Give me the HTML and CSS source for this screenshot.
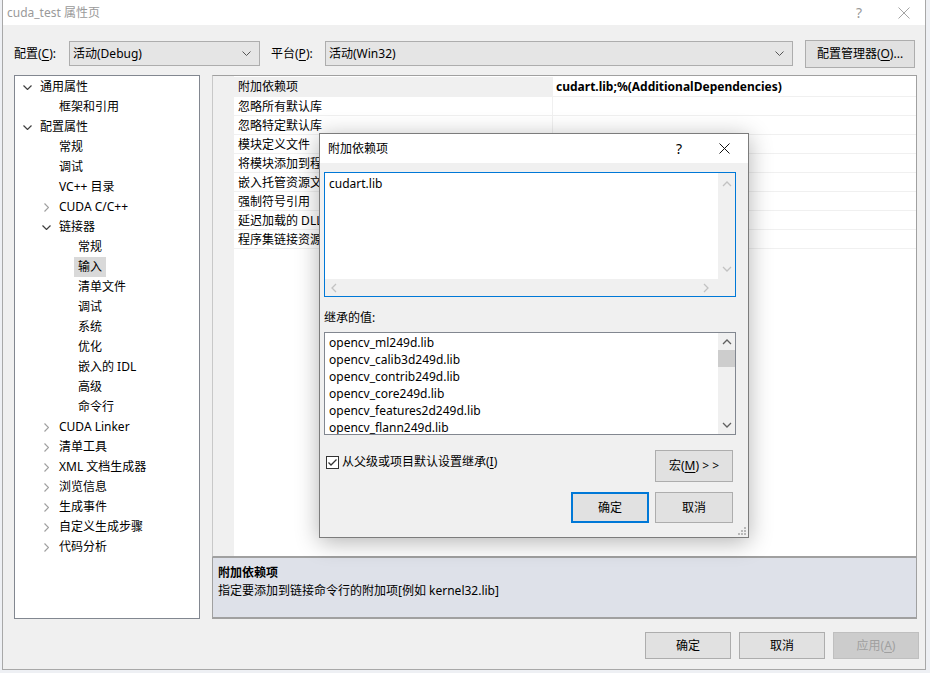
FILE: index.html
```html
<!DOCTYPE html>
<html lang="zh-CN">
<head>
	<meta charset="UTF-8">
	<title>cuda_test 属性页</title>
	<link rel="stylesheet" href="styles.css">
</head>
<body>
<div class="desk">
	<div class="win">
		<div class="titlebar">
			<span class="title">cuda_test 属性页</span>
			<span class="t-help">?</span>
			<svg class="t-close" width="12" height="12" viewBox="0 0 12 12"><path d="M0.5 0.5L11.5 11.5M11.5 0.5L0.5 11.5"/></svg>
		</div>
		<div class="toolbar">
			<span class="lbl l1">配置(<u>C</u>):</span>
			<div class="combo c1"><span>活动(Debug)</span><svg width="9" height="5" viewBox="0 0 9 5"><path d="M0.5 0.5L4.5 4.5L8.5 0.5"/></svg></div>
			<span class="lbl l2">平台(<u>P</u>):</span>
			<div class="combo c2"><span>活动(Win32)</span><svg width="9" height="5" viewBox="0 0 9 5"><path d="M0.5 0.5L4.5 4.5L8.5 0.5"/></svg></div>
			<div class="btn mgr">配置管理器(<u>O</u>)...</div>
		</div>
		<div class="main">
			<ul class="tree">
				<li class="lv0"><i class="open"></i>通用属性</li>
				<li class="lv1"><i></i>框架和引用</li>
				<li class="lv0"><i class="open"></i>配置属性</li>
				<li class="lv1"><i></i>常规</li>
				<li class="lv1"><i></i>调试</li>
				<li class="lv1"><i></i>VC++ 目录</li>
				<li class="lv1"><i class="shut"></i>CUDA C/C++</li>
				<li class="lv1"><i class="open"></i>链接器</li>
				<li class="lv2"><i></i>常规</li>
				<li class="lv2"><i></i><span class="sel">输入</span></li>
				<li class="lv2"><i></i>清单文件</li>
				<li class="lv2"><i></i>调试</li>
				<li class="lv2"><i></i>系统</li>
				<li class="lv2"><i></i>优化</li>
				<li class="lv2"><i></i>嵌入的 IDL</li>
				<li class="lv2"><i></i>高级</li>
				<li class="lv2"><i></i>命令行</li>
				<li class="lv1"><i class="shut"></i>CUDA Linker</li>
				<li class="lv1"><i class="shut"></i>清单工具</li>
				<li class="lv1"><i class="shut"></i>XML 文档生成器</li>
				<li class="lv1"><i class="shut"></i>浏览信息</li>
				<li class="lv1"><i class="shut"></i>生成事件</li>
				<li class="lv1"><i class="shut"></i>自定义生成步骤</li>
				<li class="lv1"><i class="shut"></i>代码分析</li>
			</ul>
			<div class="right">
				<div class="grid">
					<div class="row cur"><span class="name">附加依赖项</span><span class="val">cudart.lib;%(AdditionalDependencies)</span></div>
					<div class="row"><span class="name">忽略所有默认库</span><span class="val"></span></div>
					<div class="row"><span class="name">忽略特定默认库</span><span class="val"></span></div>
					<div class="row"><span class="name">模块定义文件</span><span class="val"></span></div>
					<div class="row"><span class="name">将模块添加到程序集</span><span class="val"></span></div>
					<div class="row"><span class="name">嵌入托管资源文件</span><span class="val"></span></div>
					<div class="row"><span class="name">强制符号引用</span><span class="val"></span></div>
					<div class="row"><span class="name">延迟加载的 DLL</span><span class="val"></span></div>
					<div class="row"><span class="name">程序集链接资源</span><span class="val"></span></div>
				</div>
				<div class="desc">
					<div class="desc-title">附加依赖项</div>
					<div>指定要添加到链接命令行的附加项[例如 kernel32.lib]</div>
				</div>
			</div>
		</div>
		<div class="footer">
			<div class="btn">确定</div>
			<div class="btn">取消</div>
			<div class="btn off">应用(<u>A</u>)</div>
		</div>
	</div>

	<div class="dlg">
		<div class="dlg-title">
			<span class="title">附加依赖项</span>
			<span class="d-help">?</span>
			<svg class="d-close" width="11" height="11" viewBox="0 0 11 11"><path d="M0.5 0.5L10.5 10.5M10.5 0.5L0.5 10.5"/></svg>
		</div>
		<div class="dlg-body">
			<div class="edit">
				<div class="edit-text">cudart.lib</div>
				<div class="vbar">
					<svg class="arr dim" width="10" height="6" viewBox="0 0 10 6"><path d="M1 5L5 1L9 5"/></svg>
					<svg class="arr dim" width="10" height="6" viewBox="0 0 10 6"><path d="M1 1L5 5L9 1"/></svg>
				</div>
				<div class="hbar">
					<svg class="arr dim" width="6" height="10" viewBox="0 0 6 10"><path d="M5 1L1 5L5 9"/></svg>
					<svg class="arr dim" width="6" height="10" viewBox="0 0 6 10"><path d="M1 1L5 5L1 9"/></svg>
				</div>
				<div class="corner"></div>
			</div>
			<div class="inh">继承的值:</div>
			<div class="list">
				<ul class="items">
					<li>opencv_ml249d.lib</li>
					<li>opencv_calib3d249d.lib</li>
					<li>opencv_contrib249d.lib</li>
					<li>opencv_core249d.lib</li>
					<li>opencv_features2d249d.lib</li>
					<li>opencv_flann249d.lib</li>
				</ul>
				<div class="lbar">
					<svg class="arr" width="10" height="6" viewBox="0 0 10 6"><path d="M1 5L5 1L9 5"/></svg>
					<div class="thumb"></div>
					<svg class="arr down" width="10" height="6" viewBox="0 0 10 6"><path d="M1 1L5 5L9 1"/></svg>
				</div>
			</div>
			<div class="opts">
				<div class="chk-row">
					<svg class="chk" width="13" height="13" viewBox="0 0 13 13"><rect x="0.5" y="0.5" width="12" height="12" fill="#fff" stroke="#333"/><path d="M2.5 6.5L5 9L10.5 3.5" fill="none" stroke="#333" stroke-width="1.3"/></svg>
					<span>从父级或项目默认设置继承(<u>I</u>)</span>
				</div>
				<div class="btn dbtn macro">宏(<u>M</u>) &gt; &gt;</div>
			</div>
			<div class="dlg-btns">
				<div class="btn dbtn def">确定</div>
				<div class="btn dbtn">取消</div>
			</div>
		</div>
		<svg class="grip" width="8" height="8" viewBox="0 0 8 8"><rect x="6" y="0" width="2" height="2"/><rect x="3" y="3" width="2" height="2"/><rect x="6" y="3" width="2" height="2"/><rect x="0" y="6" width="2" height="2"/><rect x="3" y="6" width="2" height="2"/><rect x="6" y="6" width="2" height="2"/></svg>
	</div>
</div>
</body>
</html>
```

FILE: styles.css
```css
*{
	box-sizing: border-box;
}
body,ul,li{
	margin:0;
	padding:0;
}
ul{
	list-style-type: none;
}
body{
	background: #eef0f4;
	font:12px/18px "Noto Sans","Noto Sans CJK SC",sans-serif;
	color:#000;
}
u{
	text-decoration: underline;
	text-underline-offset: 2px;
}
.desk{
	position: relative;
	width:930px;
	height:673px;
	overflow: hidden;
}
.win{
	margin-left:2px;
	width:924px;
	height:670px;
	background: #f0f0f0;
	border:1px solid #a8a8a8;
	border-top:0;
	display: flex;
	flex-direction: column;
}

/* title bar */
.titlebar{
	height:25px;
	flex:none;
	background: #fff;
	display: flex;
	align-items: center;
	padding:0 15px 0 4px;
	color:#9a9a9a;
}
.titlebar .title{
	flex:1;
}
.t-help{
	width:10px;
	margin-right:34px;
	font-size:14px;
	text-align: center;
}
.t-close path{
	stroke:#9a9a9a;
	stroke-width:.9;
	fill:none;
}

/* config bar */
.toolbar{
	height:50px;
	flex:none;
	display: flex;
	align-items: center;
	padding:7px 0 0 11px;
}
.lbl.l1{
	width:55px;
}
.lbl.l2{
	width:54px;
	margin-left:11px;
}
.combo{
	height:25px;
	background: #e5e5e5;
	border:1px solid #adadad;
	display: flex;
	align-items: center;
	justify-content: space-between;
	padding:0 8px 0 3px;
}
.combo svg path{
	stroke:#555;
	fill:none;
}
.combo.c1{
	width:191px;
}
.combo.c2{
	width:468px;
}
.btn{
	height:27px;
	width:86px;
	background: #e1e1e1;
	border:1px solid #adadad;
	display: flex;
	align-items: center;
	justify-content: center;
}
.btn.mgr{
	width:110px;
	height:28px;
	margin-left:12px;
}

/* main area */
.main{
	height:544px;
	flex:none;
	display: flex;
	padding-left:11px;
}
.tree{
	width:186px;
	background: #fff;
	border:1px solid #828790;
	padding-top:1px;
}
.tree li{
	height:20px;
	line-height:20px;
	display: flex;
	align-items: center;
	white-space: nowrap;
}
.tree li i{
	width:18px;
	height:20px;
	margin-right:4px;
	flex:none;
	background-repeat: no-repeat;
	background-position: center;
}
.tree li.lv0{
	padding-left:3px;
}
.tree li.lv1{
	padding-left:22px;
}
.tree li.lv2{
	padding-left:41px;
}
.tree i.open{
	background-image: url("data:image/svg+xml,%3Csvg xmlns='http://www.w3.org/2000/svg' width='9' height='5'%3E%3Cpath d='M0.5 0.5L4.5 4.5L8.5 0.5' fill='none' stroke='%23404040' stroke-width='1.2'/%3E%3C/svg%3E");
}
.tree i.shut{
	background-image: url("data:image/svg+xml,%3Csvg xmlns='http://www.w3.org/2000/svg' width='5' height='9'%3E%3Cpath d='M0.5 0.5L4.5 4.5L0.5 8.5' fill='none' stroke='%23a0a0a0' stroke-width='1.2'/%3E%3C/svg%3E");
}
.tree .sel{
	background: #d9d9d9;
	padding:0 4px;
	margin-left:-4px;
}
.right{
	width:705px;
	margin-left:12px;
	display: flex;
	flex-direction: column;
}
.grid{
	height:482px;
	background: #fff;
	border:1px solid #a0a0a0;
	border-left-color:#c8c8c8;
	padding-left:21px;
	padding-top:1px;
	position: relative;
}
.grid:before{
	content:"";
	position: absolute;
	left:0;
	top:0;
	bottom:0;
	width:21px;
	background: #f0f0f0;
}
.row{
	height:19px;
	display: flex;
	border-bottom:1px solid #f0f0f0;
	line-height:19px;
}
.row.cur{
	height:20px;
}
.row .name{
	width:319px;
	padding-left:4px;
	white-space: nowrap;
	overflow: hidden;
	border-right:1px solid #f0f0f0;
}
.row .val{
	flex:1;
	padding-left:3px;
	font-weight:700;
}
.row.cur .name{
	background: #f0f0f0;
}
.desc{
	height:62px;
	background: #dee1e9;
	border:1px solid #a0a0a0;
	border-bottom-width:2px;
	padding:6px 0 0 5px;
}
.desc-title{
	font-weight:700;
}

/* bottom buttons */
.footer{
	flex:1;
	display: flex;
	justify-content: flex-end;
	gap:8px;
	padding:13px 6px 0 0;
}
.btn.off{
	background: #cccccc;
	border-color:#bfbfbf;
	color:#a0a0a0;
}

/* dependency dialog */
.dlg{
	position: absolute;
	left:319px;
	top:133px;
	width:430px;
	height:405px;
	background: #f0f0f0;
	border:1px solid #7c7c7c;
	box-shadow: 0 4px 22px rgba(0,0,0,.3);
	display: flex;
	flex-direction: column;
}
.dlg-title{
	height:29px;
	flex:none;
	background: #fff;
	display: flex;
	align-items: center;
	padding:0 18px 0 8px;
}
.dlg-title .title{
	flex:1;
}
.d-help{
	width:10px;
	margin-right:35px;
	font-size:14px;
	text-align: center;
}
.d-close path{
	stroke:#111;
	fill:none;
}
.dlg-body{
	padding:9px 15px 0 4px;
}
.edit{
	height:125px;
	margin-right:-3px;
	border:1px solid #0078d7;
	background: #fff;
	display: grid;
	grid-template-columns: 1fr 17px;
	grid-template-rows: 1fr 17px;
}
.edit-text{
	padding:2px 4px;
}
.vbar,.hbar,.lbar{
	background: #f0f0f0;
	display: flex;
	align-items: center;
	justify-content: space-between;
}
.vbar{
	flex-direction: column;
	padding:8px 0 7px;
}
.hbar{
	padding:0 9px 0 6px;
}
.corner{
	background: #f0f0f0;
}
.arr path{
	fill:none;
	stroke:#606060;
	stroke-width:1.3;
}
.arr.dim path{
	stroke:#c2c2c2;
}
.inh{
	margin-top:12px;
}
.list{
	height:103px;
	margin:5px -3px 0 0;
	border:1px solid #828790;
	background: #fff;
	display: flex;
	overflow: hidden;
}
.items{
	flex:1;
	padding:1px 0 0 4px;
}
.items li{
	height:17px;
	line-height:17px;
}
.lbar{
	width:17px;
	flex-direction: column;
	justify-content: flex-start;
	padding-top:6px;
}
.lbar .thumb{
	width:17px;
	height:17px;
	margin-top:5px;
	background: #cdcdcd;
}
.lbar .down{
	margin-top:auto;
	margin-bottom:6px;
}
.opts{
	margin-top:15px;
	display: flex;
	align-items: flex-start;
	justify-content: space-between;
}
.chk-row{
	display: flex;
	align-items: center;
	margin:3px 0 0 2px;
}
.chk{
	margin-right:3px;
}
.dbtn{
	width:78px;
	height:31px;
}
.macro{
	height:32px;
}
.dlg-btns{
	margin-top:10px;
	display: flex;
	justify-content: flex-end;
	gap:6px;
}
.def{
	border:2px solid #0078d7;
}
.grip{
	position: absolute;
	right:2px;
	bottom:2px;
	fill:#b8b8b8;
}
```
